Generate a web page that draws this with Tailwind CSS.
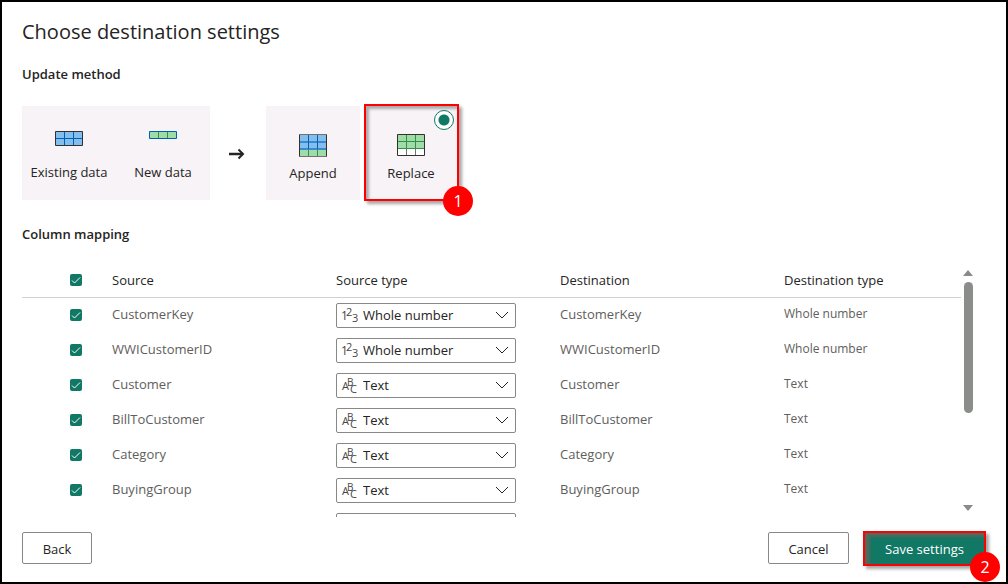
<!DOCTYPE html>
<html lang="en">
<head>
<meta charset="utf-8">
<meta name="viewport" content="width=device-width, initial-scale=1">
<title>Choose destination settings</title>
<script src="https://cdn.jsdelivr.net/npm/@tailwindcss/browser@4"></script>
</head>
<body class="font-['Open_Sans','Noto_Sans',sans-serif] text-[13px] leading-5 text-[#252423]">
<svg class="hidden" aria-hidden="true">
  <symbol id="number" viewBox="0 0 17 18"><g fill="#484644" font-family="Open Sans, sans-serif"><text x="0" y="14" font-size="12">1</text><text x="5" y="10" font-size="11">2</text><text x="11" y="16" font-size="11">3</text></g></symbol>
  <symbol id="text" viewBox="0 0 17 18"><g fill="#484644" font-family="Open Sans, sans-serif"><text x="1" y="14" font-size="11">A</text><text x="6" y="10" font-size="10">B</text><text x="9" y="17" font-size="11">C</text></g></symbol>
  <symbol id="chevron" viewBox="0 0 14 8"><path d="M1 1l6 6 6-6" fill="none" stroke="#252423"/></symbol>
  <symbol id="tick" viewBox="0 0 12 12"><path d="M2 6.500l2.500 2.500 5.500-5.500" fill="none" stroke="#fff"/></symbol>
</svg>
<main class="flex h-screen flex-col border-2 border-black bg-white px-5 pt-[17px] pb-[18px]">
  <h1 class="text-xl leading-[26px]">Choose destination settings</h1>

  <h2 class="mt-[19px] text-[13px] font-semibold">Update method</h2>
  <div class="mt-[22px] flex h-[94px] shrink-0">
    <div class="flex bg-[#f7f3f7]">
      <div class="flex w-[94px] flex-col items-center pt-[25px]">
        <svg class="h-[15px] w-7" viewBox="0 0 28 15"><path d="M.5.5h27v14H.5z" fill="#83beec"/><path d="M9.5 1v13M18.5 1v13M1 7.5h26" stroke="#005fb8"/><path d="M.5.5h27v14H.5z" fill="none" stroke="#323130"/></svg>
        <span class="mt-4">Existing data</span>
      </div>
      <div class="flex w-[94px] flex-col items-center pt-[25px]">
        <svg class="h-2 w-7" viewBox="0 0 28 8"><path d="M.5.5h27v7H.5z" fill="#a0dca8"/><path d="M9.5 1v6M18.5 1v6" stroke="#309048"/><path d="M.5.5h27v7H.5z" fill="none" stroke="#005fb8"/></svg>
        <span class="mt-[23px]">New data</span>
      </div>
    </div>
    <div class="flex w-14 items-center justify-center pt-[2px] pr-0.5">
      <svg class="h-3 w-4" viewBox="0 0 16 12"><path d="M0 6h14" stroke="#252423" stroke-width="2.500"/><path d="M9.500 1.500l4.500 4.500-4.500 4.500" fill="none" stroke="#252423" stroke-width="2"/></svg>
    </div>
    <label class="flex w-[94px] flex-col items-center bg-[#f7f3f7] pt-7">
      <input type="radio" name="method" class="sr-only">
      <svg class="h-[23px] w-7" viewBox="0 0 28 23"><path d="M0 0h28v16H0z" fill="#83beec"/><path d="M0 15h28v8H0z" fill="#a0dca8"/><path d="M1 8h26M1 15h26" stroke="#3b8ad0" stroke-width="2"/><path d="M9.500 1v14M18.500 1v14" stroke="#005fb8"/><path d="M9.500 16v6M18.500 16v6" stroke="#309048"/><path d="M.5 1v21M27.500 1v21" stroke="#323130"/><path d="M0 .5h28M0 22.500h28" stroke="#75716f"/></svg>
      <span class="mt-1.5">Append</span>
    </label>
    <label class="relative -mt-0.5 -mb-px ml-1 flex w-[95px] flex-col items-center border-2 border-[#ff0000] bg-[#f7f3f7] pt-7 pr-px shadow-[3px_3px_3px_rgba(0,0,0,0.35),inset_3px_3px_3px_rgba(0,0,0,0.3)]">
      <input type="radio" name="method" checked class="absolute top-1 right-[3px] size-5 appearance-none rounded-full border border-[#117865] bg-[radial-gradient(circle,#117865_5px,white_6px)]">
      <svg class="h-[22px] w-7" viewBox="0 0 28 22"><path d="M0 0h28v15H0z" fill="#a0dca8"/><path d="M0 15h28v7H0z" fill="#fff"/><path d="M1 7.500h26M1 14.500h26M9.500 1v14M18.500 1v14" stroke="#309048"/><path d="M9.500 15v6M18.500 15v6" stroke="#75716f"/><path d="M.5.5h27v21H.5z" fill="none" stroke="#323130"/></svg>
      <span class="mt-[7px]">Replace</span>
      <span class="absolute -right-4 -bottom-[17px] grid size-[30px] place-items-center rounded-full bg-[#ff0000] text-base text-white">1</span>
    </label>
  </div>

  <h2 class="mt-6 text-[13px] font-semibold">Column mapping</h2>
  <div class="mt-[18px] flex min-h-0 flex-1 pr-[11px]">
    <div class="min-w-0 flex-1 overflow-hidden">
      <table class="w-full table-fixed text-left">
        <colgroup><col class="w-[90px]"><col class="w-56"><col class="w-56"><col class="w-56"><col></colgroup>
        <thead>
          <tr class="h-[35px] border-b border-[#d2d0ce]">
            <th class="pt-px pl-12 font-normal"><span class="grid size-3"><input type="checkbox" checked aria-label="Select all" class="col-start-1 row-start-1 size-3 appearance-none rounded-xs bg-[#117865]"><svg class="pointer-events-none col-start-1 row-start-1 size-3"><use href="#tick"/></svg></span></th>
            <th class="pt-px font-normal">Source</th><th class="pt-px font-normal">Source type</th><th class="pt-px font-normal">Destination</th><th class="pt-px font-normal">Destination type</th>
          </tr>
        </thead>
        <tbody id="rows" class="text-[#605e5c]"></tbody>
      </table>
    </div>
    <div class="flex w-[14px] flex-col items-center pt-2" aria-hidden="true">
      <svg class="h-[6px] w-[10px]" viewBox="0 0 10 6"><path d="M5 0l5 6H0z" fill="#8a8a8a"/></svg>
      <div class="mt-[6px] h-[131px] w-[9px] rounded-full bg-[#8b8d8b]"></div>
      <svg class="mt-auto mb-[6px] h-[6px] w-[10px]" viewBox="0 0 10 6"><path d="M0 0h10L5 6z" fill="#8a8a8a"/></svg>
    </div>
  </div>

  <div class="mt-[15px] flex h-8 shrink-0 items-center">
    <button class="h-8 w-[70px] rounded-xs border border-[#8a8886] bg-white pt-0.5">Back</button>
    <button class="ml-auto h-8 w-[81px] rounded-xs border border-[#8a8886] bg-white pt-0.5">Cancel</button>
    <button class="relative ml-[14px] h-[35px] w-[123px] border-2 border-[#ff0000] bg-[#117865] pt-0.5 text-white shadow-[3px_3px_3px_rgba(0,0,0,0.35),inset_5px_4px_3px_rgba(110,100,90,0.7)]">Save settings<span class="absolute -right-4 -bottom-[18px] grid size-[30px] place-items-center rounded-full bg-[#ff0000] text-base">2</span></button>
  </div>
</main>
<script>
const columns = [
  ['CustomerKey', 'Whole number'], ['WWICustomerID', 'Whole number'], ['Customer', 'Text'],
  ['BillToCustomer', 'Text'], ['Category', 'Text'], ['BuyingGroup', 'Text'], ['', 'Text'],
];
document.getElementById('rows').innerHTML = columns.map(([name, type]) => `
  <tr class="h-[35px]">
    <td class="pl-12"><span class="grid size-3"><input type="checkbox" checked aria-label="Include ${name}" class="col-start-1 row-start-1 size-3 appearance-none rounded-xs bg-[#117865]"><svg class="pointer-events-none col-start-1 row-start-1 size-3"><use href="#tick"/></svg></span></td>
    <td class="pb-0.5">${name}</td>
    <td class="pt-0.5"><div class="relative w-[180px]">
      <select aria-label="Source type of ${name}" class="block h-[25px] w-full appearance-none rounded-xs border border-[#8a8886] bg-white pb-0.5 pl-[26px] text-[13px] leading-5 text-[#252423]"><option>${type}</option></select>
      <svg class="pointer-events-none absolute top-[3px] left-[5px] h-[18px] w-[17px]"><use href="#${type === 'Text' ? 'text' : 'number'}"/></svg>
      <svg class="pointer-events-none absolute top-2 right-[7px] h-2 w-[14px]"><use href="#chevron"/></svg>
    </div></td>
    <td class="pb-0.5">${name}</td>
    <td class="pb-0.5 text-xs">${name ? type : ''}</td>
  </tr>`).join('');
</script>
</body>
</html>
